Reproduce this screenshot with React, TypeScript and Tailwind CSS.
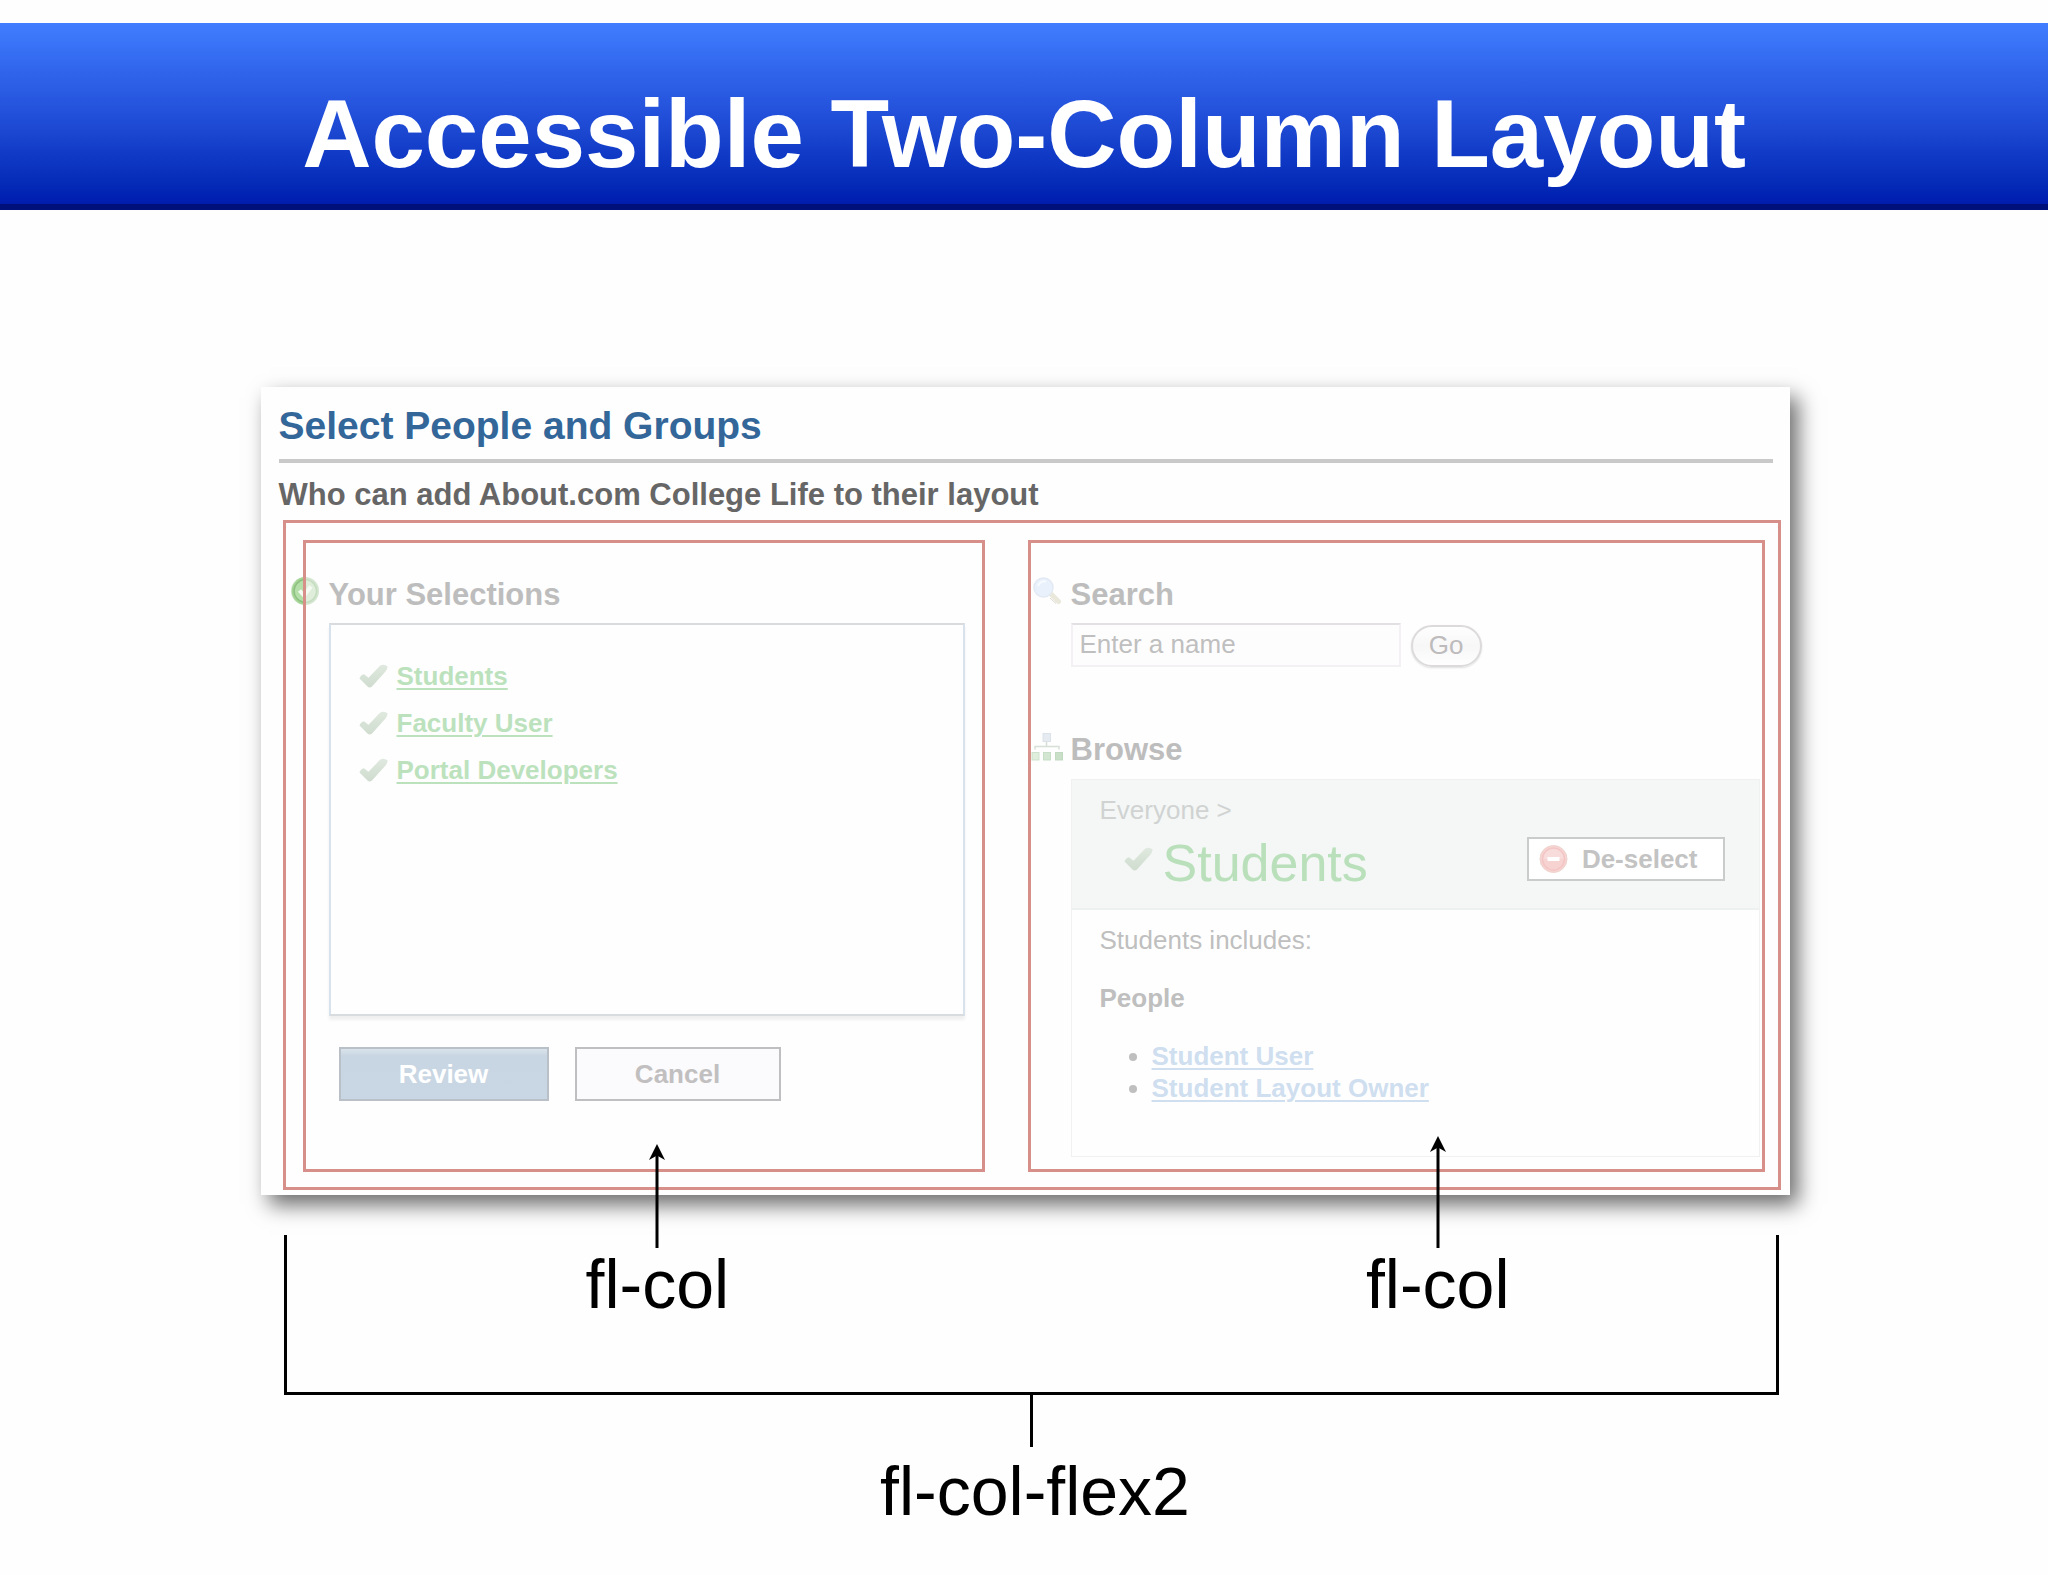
import type { ReactNode } from "react";

const selections = ["Students", "Faculty User", "Portal Developers"];
const people = ["Student User", "Student Layout Owner"];

function CheckIcon({ className }: { className: string }) {
  return (
    <svg viewBox="0 0 29 24" className={className} aria-hidden="true">
      <defs>
        <linearGradient id="check" x1="0" y1="0" x2="0" y2="1">
          <stop offset="0" stopColor="#e0e9df" />
          <stop offset="1" stopColor="#cfdcce" />
        </linearGradient>
      </defs>
      <path
        d="M0.5 14.5 Q1.5 11 5 10.2 L9.5 13.8 L21 1.8 Q24.5 -0.6 28.5 2.2 Q28.8 4.5 26.5 7.5 L13 22.6 Q10.5 24.6 8.5 22.6 Z"
        fill="url(#check)"
      />
    </svg>
  );
}

function SelectedIcon() {
  return (
    <svg viewBox="0 0 28 28" className="absolute -left-[38px] top-0 -z-10 size-7" aria-hidden="true">
      <circle cx="14" cy="14" r="14" fill="#d3e6cf" />
      <circle cx="14" cy="14" r="11.5" fill="#dfeedb" stroke="#c5dcc1" strokeWidth="1.5" />
      <path d="M13 0.1 A14 14 0 0 0 13 27.9 Z" fill="#a5d696" />
      <path d="M13 2.6 A11.5 11.5 0 0 0 13 25.4" fill="#b5dfa9" stroke="#8dbf81" strokeWidth="1.5" />
      <path d="M8.5 13.5 L13 18.5 L20 9.5" fill="none" stroke="#f5faf3" strokeWidth="4" />
    </svg>
  );
}

function SearchIcon() {
  return (
    <svg viewBox="0 0 28 28" className="absolute -left-[38px] top-0 size-7" aria-hidden="true">
      <path d="M18 17 L25.5 24.5" stroke="#e9e8da" strokeWidth="5" strokeLinecap="round" />
      <path d="M17 21 L23 26.5" stroke="#dcdad0" strokeWidth="1" />
      <circle cx="10.5" cy="10.5" r="9.5" fill="#e9f2fc" stroke="#e3e9f3" strokeWidth="1.5" />
      <path d="M5 9 A6.5 6.5 0 0 1 13 4.5" fill="none" stroke="#f8fbff" strokeWidth="2" />
    </svg>
  );
}

function BrowseIcon() {
  return (
    <svg viewBox="0 0 32 28" className="absolute -left-[40px] top-px h-7 w-8" aria-hidden="true">
      <rect x="12" y="0.5" width="7.5" height="8" fill="#e6eaf1" stroke="#dce2e9" />
      <path d="M15.5 9 V13.5 M4 16.5 V13.5 H28 V16.5" fill="none" stroke="#d8dfd8" strokeWidth="1.5" />
      <rect x="1" y="19.5" width="7" height="7.5" fill="#dfeedd" stroke="#cde2cc" />
      <rect x="12.5" y="19.5" width="7" height="7.5" fill="#d2e6d1" stroke="#c8dfc7" />
      <rect x="24.5" y="19.5" width="7" height="7.5" fill="#c9dfc8" stroke="#c1d9c0" />
    </svg>
  );
}

function MinusIcon() {
  return (
    <svg viewBox="0 0 29 28" className="h-7 w-[29px]" aria-hidden="true">
      <circle cx="14.5" cy="14" r="13.5" fill="#f6d3d1" stroke="#eed2cc" />
      <path d="M2.5 14 A12 12 0 0 1 26.5 14 Z" fill="#f8dcdb" />
      <circle cx="14.5" cy="14" r="11" fill="none" stroke="#f3c5c4" strokeWidth="1.5" />
      <rect x="8.5" y="12" width="12" height="4" fill="#fff" />
    </svg>
  );
}

function ColumnHeading({ icon, children }: { icon: ReactNode; children: ReactNode }) {
  return (
    <h3 className="relative text-[31px] leading-9 font-bold text-[#bdbdbd]">
      {icon}
      {children}
    </h3>
  );
}

// Label under a column, with an arrow that reaches up into the card
function ColumnLabel({ arrow, children }: { arrow: number; children: ReactNode }) {
  return (
    <div className="relative">
      <svg
        width="18"
        height={arrow}
        className="absolute bottom-full left-1/2 -translate-x-1/2"
        aria-hidden="true"
      >
        <path d={`M9 8 V${arrow}`} stroke="#000" strokeWidth="3" />
        <path d="M9 0 L17 16 L9 11.5 L1 16 Z" fill="#000" />
      </svg>
      <span>{children}</span>
    </div>
  );
}

export default function App() {
  return (
    <div className="bg-[#fefefe] pt-[23px] pb-12 font-['Liberation_Sans',Arial,sans-serif]">
      <header className="border-b-[6px] border-[#00107a] bg-linear-to-b from-[#417dff] via-[#2350da] to-[#001cae] pt-[57px] pb-4">
        <h1 className="text-center text-[96px] leading-[108px] font-bold text-white">
          Accessible Two-Column Layout
        </h1>
      </header>

      <main className="mx-auto mt-[177px] w-full max-w-[1531px] pl-0.5">
        <div className="bg-[#fefefe] pt-[19px] pb-[5px] shadow-[8px_10px_20px_rgba(0,0,0,0.58)]">
          <div className="pr-[17px] pl-[18px]">
            <h2 className="text-[39px] leading-10 font-bold text-[#336699]">Select People and Groups</h2>
            <hr className="mt-[13px] border-t-4 border-[#c9c9c9]" />
            <p className="mt-[14px] text-[31px] leading-9 font-bold text-[#666]">
              Who can add About.com College Life to their layout
            </p>
          </div>

          <div className="isolate mt-[7px] mr-[9px] ml-[22px] grid grid-cols-[682fr_737fr] gap-[43px] border-3 border-[#d78f89] pt-[17px] pr-[13px] pb-[15px] pl-[17px]">
            {/* Selections */}
            <section className="border-3 border-[#d78f89] pt-[34px] pr-[17px] pl-[23px]">
              <ColumnHeading icon={<SelectedIcon />}>Your Selections</ColumnHeading>
              <ul className="mt-[10px] flex min-h-[393px] flex-col gap-[17px] border-2 border-x-[#d7e2ec] border-y-[#d9dcde] pt-9 pl-7 shadow-[0_4px_3px_rgba(0,0,0,0.06)]">
                {selections.map((name) => (
                  <li key={name} className="flex items-center gap-[9px]">
                    <CheckIcon className="h-6 w-[29px]" />
                    <a
                      href="#"
                      className="text-[26px] leading-[30px] font-bold text-[#bce2bd] underline decoration-2 underline-offset-3"
                    >
                      {name}
                    </a>
                  </li>
                ))}
              </ul>
              <div className="mt-[31px] ml-[10px] flex gap-[26px] text-[26px] leading-[30px] font-bold">
                <button
                  type="button"
                  className="h-[54px] w-[210px] border-2 border-[#b9c0c7] bg-linear-to-b from-[#d9e3eb] via-[#c8d5e2] via-15% to-[#c9d6e3] text-white"
                >
                  Review
                </button>
                <button
                  type="button"
                  className="h-[54px] w-[206px] border-2 border-[#bfbfc1] bg-[#fbfafc] text-[#c1bfc0]"
                >
                  Cancel
                </button>
              </div>
            </section>

            {/* Search and browse */}
            <section className="border-3 border-[#d78f89] pt-[34px] pr-0.5 pb-3 pl-10">
              <ColumnHeading icon={<SearchIcon />}>
                <label htmlFor="name">Search</label>
              </ColumnHeading>
              <div className="mt-[10px] flex items-end gap-[10px] text-[26px] leading-[30px]">
                <input
                  id="name"
                  type="text"
                  placeholder="Enter a name"
                  className="h-11 w-[330px] border-2 border-[#f3f1f3] border-t-[#e2e0e2] bg-[#fefdfe] px-[7px] pb-0.5 placeholder:text-[#bfbfbf]"
                />
                <button
                  type="button"
                  className="h-[42px] w-[71px] rounded-full border-2 border-[#dcdadb] bg-linear-to-b from-[#fefefe] via-[#f8f7f8] to-[#fefefe] pb-0.5 text-[#bdbbbc] shadow-[0_1px_2px_rgba(0,0,0,0.12)]"
                >
                  Go
                </button>
              </div>

              <div className="mt-[65px]">
                <ColumnHeading icon={<BrowseIcon />}>Browse</ColumnHeading>
              </div>
              <div className="mt-[11px] border border-[#f1f1f1] text-[26px] leading-[30px] text-[#bfbfbf]">
                <div className="border-b-2 border-[#edf2f1] bg-[#f4f7f6] pt-[15px] pr-[34px] pb-[19px] pl-7">
                  <p className="text-[#d0d3d2]">Everyone &gt;</p>
                  <div className="mt-3 flex items-start">
                    <CheckIcon className="mt-2.5 ml-6 h-6 w-[29px]" />
                    <h4 className="ml-2.5 text-[52px] leading-[52px] text-[#b9e0ba]">Students</h4>
                    <button
                      type="button"
                      className="ml-auto flex h-11 items-center gap-[14px] border-2 border-[#c9cccb] bg-white pr-[25px] pl-[10px] font-bold text-[#c3c3c3]"
                    >
                      <MinusIcon />
                      De-select
                    </button>
                  </div>
                </div>
                <div className="px-7 pt-[15px] pb-[52px]">
                  <p>Students includes:</p>
                  <h4 className="mt-7 font-bold">People</h4>
                  <ul className="mt-[27px] list-disc pl-[52px] leading-8">
                    {people.map((name) => (
                      <li key={name}>
                        <a
                          href="#"
                          className="font-bold text-[#cfdff0] underline decoration-2 underline-offset-3"
                        >
                          {name}
                        </a>
                      </li>
                    ))}
                  </ul>
                </div>
              </div>
            </section>
          </div>
        </div>

        {/* Bracket */}
        <div className="mt-10 mr-[11px] ml-[23px] text-[68px] leading-[72px] text-black">
          <div className="flex h-[160px] justify-between border-x-3 border-b-3 border-black pt-[13px] pr-[266px] pl-[299px]">
            <ColumnLabel arrow={104}>fl-col</ColumnLabel>
            <ColumnLabel arrow={112}>fl-col</ColumnLabel>
          </div>
          <div className="mx-auto h-[52px] w-[3px] bg-black" />
          <p className="mt-2 pl-2 text-center">fl-col-flex2</p>
        </div>
      </main>
    </div>
  );
}
